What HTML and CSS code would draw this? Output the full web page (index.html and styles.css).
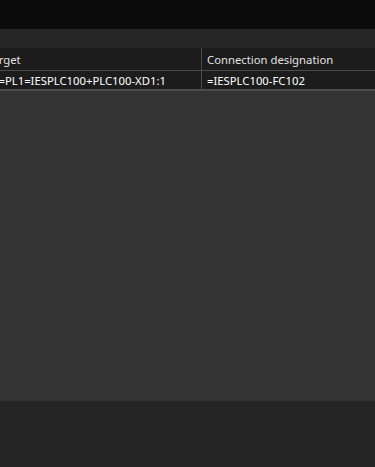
FILE: index.html
```html
<!DOCTYPE html>
<html lang="en">
<head>
    <meta charset="UTF-8">
    <meta name="viewport" content="width=device-width, initial-scale=1.0">
    <title>Connections</title>
    <link rel="stylesheet" href="styles.css">
</head>
<body>
    <div class="titlebar"></div>
    <div class="toolbar"></div>
    <div class="grid-view">
        <div class="grid">
            <div class="row head">
                <div class="cell col-target">Target</div>
                <div class="cell col-conn">Connection designation</div>
            </div>
            <div class="row data">
                <div class="cell col-target">==PL1=IESPLC100+PLC100-XD1:1</div>
                <div class="cell col-conn">=IESPLC100-FC102</div>
            </div>
        </div>
    </div>
    <div class="footer"></div>
</body>
</html>
```

FILE: styles.css
```css
html, body {
    margin: 0;
    height: 100%;
}
body {
    display: flex;
    flex-direction: column;
    background: #252525;
    font-family: "Noto Sans", "Open Sans", sans-serif;
    font-size: 11.3px;
    overflow: hidden;
}
.titlebar {
    height: 29px;
    background: #0b0b0b;
}
.toolbar {
    height: 19px;
    background: #262626;
}
.grid-view {
    height: 353px;
    background: #333333;
    overflow: hidden;
}
/* grid is scrolled a little to the right */
.grid {
    margin-left: -18px;
}
.row {
    display: flex;
    border-bottom: 1px solid #4b4b4b;
}
.head {
    height: 22px;
    background: #1b1b1b;
    color: #e2e2e2;
}
.data {
    height: 18px;
    background: #1c1c1c;
    color: #ffffff;
    border-bottom-width: 2px;
}
.cell {
    display: flex;
    align-items: center;
    padding-left: 5px;
    white-space: nowrap;
    box-sizing: border-box;
}
.data .col-target {
    padding-left: 10px;
}
.col-target {
    width: 220px;
    flex: none;
    border-right: 1px solid #4b4b4b;
}
.col-conn {
    flex: 1;
}
.footer {
    flex: 1;
    background: #252525;
}
```
